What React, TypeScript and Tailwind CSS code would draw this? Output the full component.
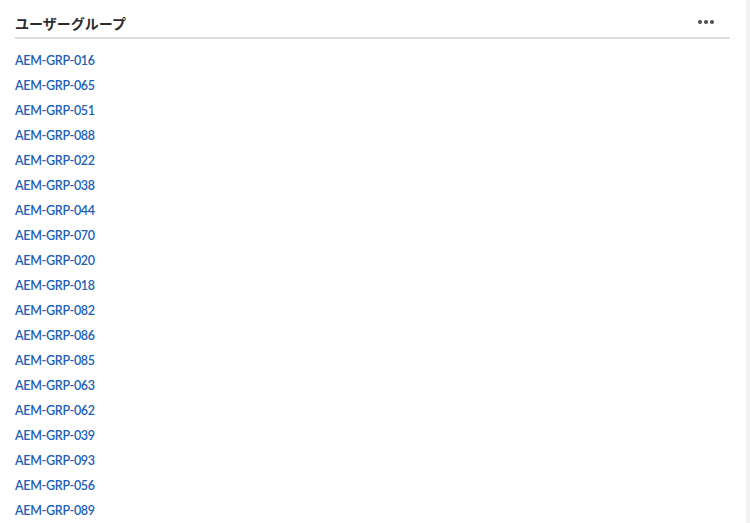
const groups = [
  "016", "065", "051", "088", "022", "038", "044", "070", "020", "018",
  "082", "086", "085", "063", "062", "039", "093", "056", "089",
];

export default function App() {
  return (
    <div className="flex h-[523px] w-[750px] overflow-hidden bg-white font-['Lato','Noto_Sans_CJK_JP',sans-serif]">
      <div className="flex-1 pl-[15px] pr-[16px]">
        <div className="flex h-[39px] items-center justify-between border-b-2 border-[#dcdcdc] pt-[9px]">
          <h2 className="text-[14px] font-bold text-[#2c2c2c] font-['Noto_Sans_CJK_JP',sans-serif]">
            ユーザーグループ
          </h2>
          <span className="mr-[16px] mb-[3px] flex gap-[2px]">
            <i className="h-[4px] w-[4px] rounded-full bg-[#4b4b4b]" />
            <i className="h-[4px] w-[4px] rounded-full bg-[#4b4b4b]" />
            <i className="h-[4px] w-[4px] rounded-full bg-[#4b4b4b]" />
          </span>
        </div>
        <ul className="pt-[7px]">
          {groups.map((g) => (
            <li key={g} className="h-[25px] leading-[25px]">
              <a href="#" className="text-[12.5px] font-semibold tracking-[-0.3px] text-[#2160b4]">
                AEM-GRP-{g}
              </a>
            </li>
          ))}
        </ul>
      </div>
      <div className="w-[4px] bg-[#f2f2f2]" />
    </div>
  );
}
